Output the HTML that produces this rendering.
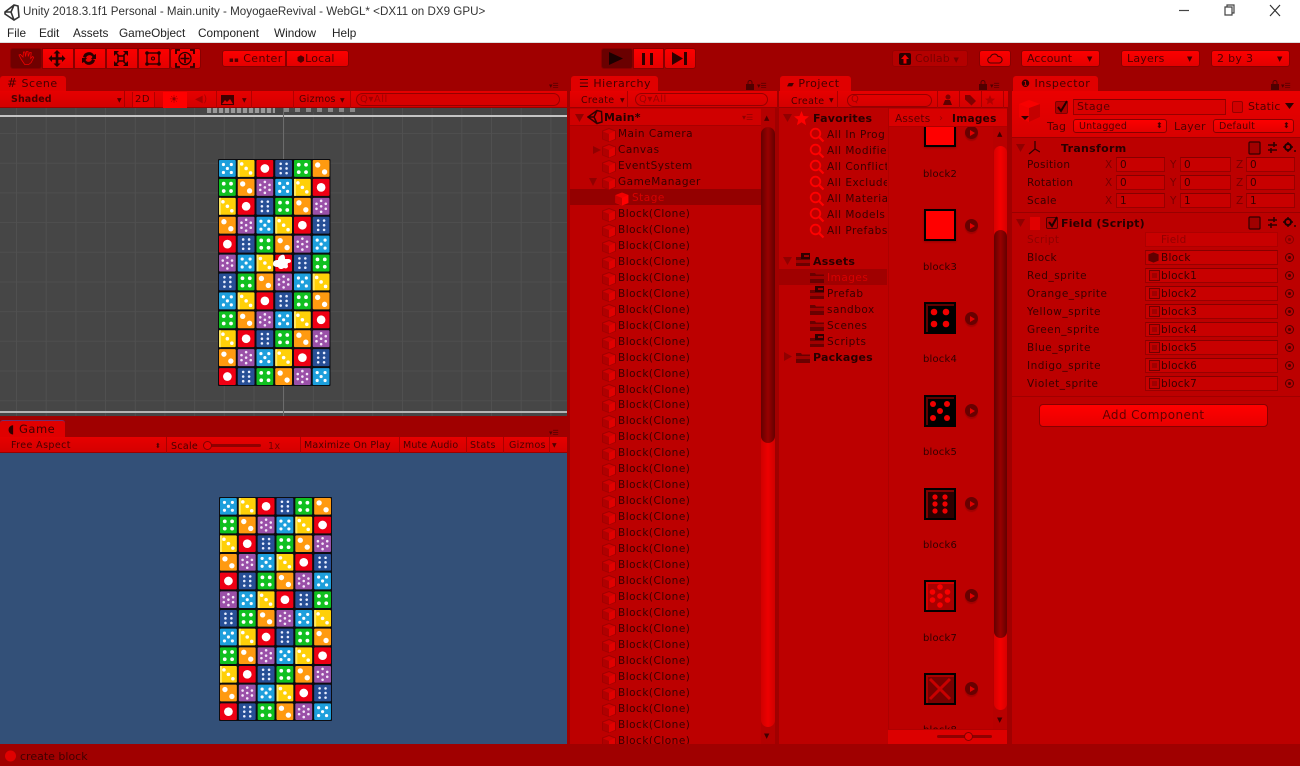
<!DOCTYPE html>
<html><head><meta charset="utf-8"><title>Unity</title>
<style>
*{box-sizing:border-box}
html,body{margin:0;padding:0;width:1300px;height:766px;overflow:hidden;background:#a00000}
body{position:relative;font-family:"DejaVu Sans","Liberation Sans",sans-serif;font-size:10.5px;color:#380000;letter-spacing:.5px;filter:blur(.2px)}
.a{position:absolute}
.t{position:absolute;white-space:nowrap;line-height:14px}
.b{font-weight:bold}
.d{color:#900000}
.btn{position:absolute;background:linear-gradient(#fc0000,#e40000);border:1px solid #880000;border-radius:3px}
.tab{position:absolute;background:#e00000;border-radius:3px 3px 0 0;color:#440000;font-size:11px;line-height:15px}
.bar{position:absolute;background:linear-gradient(#e60000,#d40000);border-bottom:1px solid #9a0000}
.fld{position:absolute;background:#c80000;border:1px solid #980000;border-top-color:#860000;height:15px;line-height:14px;padding-left:3px;white-space:nowrap;overflow:hidden;letter-spacing:.25px}
.list div{height:15.97px;line-height:15.97px;padding-left:48px;position:relative;white-space:nowrap}
.list svg{position:absolute;left:32px;top:1px}
.fav div{height:16px;line-height:16px;padding-left:48px;white-space:nowrap;position:relative}
.fav svg{position:absolute;left:30px;top:0}
.tg{position:absolute;left:1285px;width:9px;height:9px;border:1px solid #500000;border-radius:50%}
.tg:after{content:"";position:absolute;left:2px;top:2px;width:3px;height:3px;background:#500000;border-radius:50%}
.ic{position:absolute;left:1149px;width:11px;height:11px;background:#a00000;border:1px solid #700000;box-shadow:inset 0 0 0 2px #c00000}
.tile{position:absolute;width:32px;height:32px;border:2px solid #000}
.lb{position:absolute;width:36px;text-align:center;font-size:10px;line-height:12px;letter-spacing:.2px;color:#300000}
.pl{position:absolute;width:13px;height:13px;border-radius:50%;background:#680000;box-shadow:0 2px 1px #a00000}
.pl:after{content:"";position:absolute;left:5px;top:3.500px;border-left:5px solid #e00000;border-top:3px solid transparent;border-bottom:3px solid transparent}
</style></head><body>
<svg width="0" height="0" style="position:absolute">
<defs>
<symbol id="lock" viewBox="0 0 8 10"><path d="M2 4V2.500a2 2 0 0 1 4 0V4" fill="none" stroke="#500000"/><rect y="4" width="8" height="6" fill="#500000"/></symbol>
<symbol id="cube" viewBox="0 0 14 14"><path d="M7 .5 13.500 3v8L7 13.500.5 11V3z" fill="#d00000" stroke="#a00000"/><path d="M7 6 13 3v8l-6 2.500z" fill="#e00000"/><path d="M1 3.500 7 6v7L1 11z" fill="#b00000"/></symbol>
<symbol id="cubeb" viewBox="0 0 14 14"><path d="M7 .5 13.500 3v8L7 13.500.5 11V3z" fill="#f00000"/><path d="M7 6 13 3v8l-6 2.500z" fill="#ff0000"/><path d="M1 3.500 7 6v7L1 11z" fill="#c80000"/></symbol>
<symbol id="mag" viewBox="0 0 16 16"><circle cx="6.500" cy="6.500" r="4.800" fill="none" stroke="#ff0000" stroke-width="1.800"/><path d="M10 10l4.500 4.500" stroke="#ff0000" stroke-width="2.200"/></symbol>
<symbol id="fold" viewBox="0 0 16 14"><path d="M1 3h5l1 1.500h8V13H1z" fill="#6a0000"/><path d="M1 6h14v3H1z" fill="#a00000"/></symbol>
<symbol id="fold2" viewBox="0 0 16 14"><path d="M1 4h14v9H1z" fill="#6a0000"/><path d="M1 7h14v3H1z" fill="#a00000"/><path d="M6 0h9v6H6z" fill="#300000"/><path d="M9 2h5v2H9z" fill="#a00000"/></symbol>
<g id="B"><rect width="17" height="17" rx="1" fill="#1d9fdc"/><g fill="#fff"><circle cx="4.500" cy="4.500" r="1.600"/><circle cx="12.500" cy="4.500" r="1.600"/><circle cx="8.500" cy="8.500" r="1.600"/><circle cx="4.500" cy="12.500" r="1.600"/><circle cx="12.500" cy="12.500" r="1.600"/></g></g>
<g id="Y"><rect width="17" height="17" rx="1" fill="#ffd008"/><path d="M0 0h2v17H0z" fill="#ffe860"/><g fill="#fff"><circle cx="4" cy="4" r="1.800"/><circle cx="8.500" cy="8.500" r="1.800"/><circle cx="13" cy="13" r="1.800"/></g></g>
<g id="R"><rect width="17" height="17" rx="1" fill="#ee0014"/><circle cx="8.500" cy="8.500" r="4.400" fill="#fff"/></g>
<g id="I"><rect width="17" height="17" rx="1" fill="#274f96"/><g fill="#e8eeff"><circle cx="5.500" cy="3.800" r="1.300"/><circle cx="11.500" cy="3.800" r="1.300"/><circle cx="5.500" cy="8.500" r="1.300"/><circle cx="11.500" cy="8.500" r="1.300"/><circle cx="5.500" cy="13.200" r="1.300"/><circle cx="11.500" cy="13.200" r="1.300"/></g></g>
<g id="G"><rect width="17" height="17" rx="1" fill="#10c020"/><g fill="#fff"><circle cx="4.800" cy="4.800" r="1.900"/><circle cx="12.200" cy="4.800" r="1.900"/><circle cx="4.800" cy="12.200" r="1.900"/><circle cx="12.200" cy="12.200" r="1.900"/></g></g>
<g id="O"><rect width="17" height="17" rx="1" fill="#ff9a10"/><g fill="#fff"><circle cx="5" cy="5" r="2.700"/><circle cx="12" cy="12" r="2.700"/></g></g>
<g id="V"><rect width="17" height="17" rx="1" fill="#9a50a8"/><g fill="#f4e8f8"><circle cx="8.500" cy="3" r="1.300"/><circle cx="3.800" cy="6" r="1.300"/><circle cx="13.200" cy="6" r="1.300"/><circle cx="8.500" cy="8.500" r="1.300"/><circle cx="3.800" cy="11" r="1.300"/><circle cx="13.200" cy="11" r="1.300"/><circle cx="8.500" cy="14" r="1.300"/></g></g>
<g id="r1"><use href="#B"/><use href="#Y" x="19"/><use href="#R" x="38"/><use href="#I" x="57"/><use href="#G" x="76"/><use href="#O" x="95"/></g>
<g id="r2"><use href="#G"/><use href="#O" x="19"/><use href="#V" x="38"/><use href="#B" x="57"/><use href="#Y" x="76"/><use href="#R" x="95"/></g>
<g id="r3"><use href="#Y"/><use href="#R" x="19"/><use href="#I" x="38"/><use href="#G" x="57"/><use href="#O" x="76"/><use href="#V" x="95"/></g>
<g id="r4"><use href="#O"/><use href="#V" x="19"/><use href="#B" x="38"/><use href="#Y" x="57"/><use href="#R" x="76"/><use href="#I" x="95"/></g>
<g id="r5"><use href="#R"/><use href="#I" x="19"/><use href="#G" x="38"/><use href="#O" x="57"/><use href="#V" x="76"/><use href="#B" x="95"/></g>
<g id="r6"><use href="#V"/><use href="#B" x="19"/><use href="#Y" x="38"/><use href="#R" x="57"/><use href="#I" x="76"/><use href="#G" x="95"/></g>
<g id="r7"><use href="#I"/><use href="#G" x="19"/><use href="#O" x="38"/><use href="#V" x="57"/><use href="#B" x="76"/><use href="#Y" x="95"/></g>
<g id="grid"><rect width="114" height="228" rx="1" fill="#0c0c10"/><g transform="translate(1 1)"><use href="#r1"/><use href="#r2" y="19"/><use href="#r3" y="38"/><use href="#r4" y="57"/><use href="#r5" y="76"/><use href="#r6" y="95"/><use href="#r7" y="114"/><use href="#r1" y="133"/><use href="#r2" y="152"/><use href="#r3" y="171"/><use href="#r4" y="190"/><use href="#r5" y="209"/></g></g>
</defs></svg>

<!-- title bar -->
<div class="a" style="left:0;top:0;width:1300px;height:43px;background:#fff;border-bottom:1px solid #ddd"></div>
<svg class="a" style="left:3px;top:3px" width="17" height="18" viewBox="0 0 17 18"><path d="M2 9 11 2l4 1 1 11-5 3-9-6zM11 2 8 9l3 8M2 9h6" fill="none" stroke="#333" stroke-width="1.600"/></svg>
<div class="t" style="left:23px;top:5px;font:11.620px/14px 'Liberation Sans',sans-serif;letter-spacing:0;color:#333">Unity 2018.3.1f1 Personal - Main.unity - MoyogaeRevival - WebGL* &lt;DX11 on DX9 GPU&gt;</div>
<div class="t" style="left:7px;top:26px;font:11.800px/14px 'Liberation Sans',sans-serif;letter-spacing:0;color:#222">File</div>
<div class="t" style="left:39px;top:26px;font:11.800px/14px 'Liberation Sans',sans-serif;letter-spacing:0;color:#222">Edit</div>
<div class="t" style="left:73px;top:26px;font:11.800px/14px 'Liberation Sans',sans-serif;letter-spacing:0;color:#222">Assets</div>
<div class="t" style="left:119px;top:26px;font:11.800px/14px 'Liberation Sans',sans-serif;letter-spacing:0;color:#222">GameObject</div>
<div class="t" style="left:198px;top:26px;font:11.800px/14px 'Liberation Sans',sans-serif;letter-spacing:0;color:#222">Component</div>
<div class="t" style="left:274px;top:26px;font:11.800px/14px 'Liberation Sans',sans-serif;letter-spacing:0;color:#222">Window</div>
<div class="t" style="left:332px;top:26px;font:11.800px/14px 'Liberation Sans',sans-serif;letter-spacing:0;color:#222">Help</div>
<svg class="a" style="left:1175px;top:3px" width="115" height="15" viewBox="0 0 115 15"><path d="M4 7.500h10" stroke="#444" stroke-width="1.200"/><path d="M50 4h7v8h-7zM52 4V2h7v8h-2" fill="none" stroke="#444" stroke-width="1.200"/><path d="M95 2l10 11M105 2 95 13" stroke="#333" stroke-width="1.200"/></svg>

<!-- main toolbar -->
<div class="btn" style="left:10px;top:48px;width:32px;height:21px;background:#700000"></div>
<div class="btn" style="left:42px;top:48px;width:32px;height:21px;border-radius:0"></div>
<div class="btn" style="left:74px;top:48px;width:32px;height:21px;border-radius:0"></div>
<div class="btn" style="left:106px;top:48px;width:32px;height:21px;border-radius:0"></div>
<div class="btn" style="left:138px;top:48px;width:32px;height:21px;border-radius:0"></div>
<div class="btn" style="left:170px;top:48px;width:31px;height:21px"></div>
<svg class="a" style="left:10px;top:48px" width="191" height="21" viewBox="0 0 191 21">
<path d="M11 11 9 7l1.500-.5L13 9l.5-5H15l.5 4.500L16.500 3.500H18l.2 5 1.500-4h1.500l-.5 6 2-2 1 1-2.500 5-2.500 2h-4z" fill="#7a0000" stroke="#f00000" stroke-width=".8"/>
<path d="M47 2l3.500 3.500h-2.200v3.700h3.700V7l3.500 3.500L52 14v-2.200h-3.700v3.700h2.200L47 19l-3.500-3.500h2.200v-3.700H42V14l-3.500-3.500L42 7v2.200h3.700V5.500h-2.200z" fill="#2a0000"/>
<path d="M73 9a6 6 0 0 1 11-2l2-1v5h-5l1.500-2a3.500 3.500 0 0 0-6.500 1zM85 12a6 6 0 0 1-11 2l-2 1v-5h5l-1.500 2a3.500 3.500 0 0 0 6.500-1z" fill="#2a0000"/>
<path d="M104 3h5l-2 2 2 2-1 1-2-2-2 2zM118 3h-5l2 2-2 2 1 1 2-2 2 2zM104 18h5l-2-2 2-2-1-1-2 2-2-2zM118 18h-5l2-2-2-2 1-1 2 2 2-2z" fill="#2a0000"/><rect x="108" y="8" width="6" height="5" fill="none" stroke="#2a0000" stroke-width="1.500"/>
<rect x="137" y="5" width="12" height="11" fill="none" stroke="#2a0000" stroke-width="1.400"/><g fill="#2a0000"><circle cx="137" cy="5" r="1.800"/><circle cx="149" cy="5" r="1.800"/><circle cx="137" cy="16" r="1.800"/><circle cx="149" cy="16" r="1.800"/></g><circle cx="143" cy="10.500" r="1.500" fill="none" stroke="#2a0000"/>
<circle cx="175" cy="10.500" r="6" fill="none" stroke="#2a0000" stroke-width="1.300"/><path d="M175 6v9M170.500 10.500h9" stroke="#2a0000" stroke-width="1.600"/><path d="M166 6V2h4M184 6V2h-4M166 15v4h4M184 15v4h-4" fill="none" stroke="#2a0000" stroke-width="1.800"/></svg>

<div class="btn" style="left:222px;top:50px;width:64px;height:17px;border-radius:3px 0 0 3px"></div>
<div class="btn" style="left:286px;top:50px;width:63px;height:17px;border-radius:0 3px 3px 0"></div>
<div class="t" style="left:229px;top:51.500px;font-size:11px;letter-spacing:.4px;color:#500000"><span style="font-size:7px">▪▪</span> Center</div>
<div class="t" style="left:297px;top:51.500px;font-size:11px;letter-spacing:.2px;color:#500000"><span style="font-size:9px">⬢</span>Local</div>

<div class="btn" style="left:601px;top:48px;width:32px;height:21px;background:#6a0000"></div>
<div class="btn" style="left:633px;top:48px;width:31px;height:21px;border-radius:0"></div>
<div class="btn" style="left:664px;top:48px;width:32px;height:21px"></div>
<svg class="a" style="left:601px;top:48px" width="96" height="21" viewBox="0 0 96 21"><path d="M8 4l14 6.500L8 17z" fill="#1c0000"/><path d="M41 5h3v12h-3zM49 5h3v12h-3z" fill="#300000"/><path d="M71 4l11 6.500L71 17zM83 4h3v13h-3z" fill="#300000"/></svg>

<div class="btn" style="left:892px;top:50px;width:76px;height:17px;background:#b40000;border-color:#960000"></div>
<svg class="a" style="left:899px;top:53px" width="12" height="12" viewBox="0 0 12 12"><rect width="12" height="12" rx="2" fill="#2a0000"/><path d="M6 1.500 10 6H7.500v4.500h-3V6H2z" fill="#f00000"/></svg>
<div class="t" style="left:915px;top:51.500px;font-size:11px;letter-spacing:.1px;color:#780000">Collab <span style="font-size:7px">▼</span></div>
<div class="btn" style="left:979px;top:50px;width:32px;height:17px"></div>
<svg class="a" style="left:987px;top:53px" width="16" height="11" viewBox="0 0 16 11"><path d="M4 10a3 3 0 0 1-.5-6A4 4 0 0 1 11 3.500 3.200 3.200 0 0 1 12.500 10z" fill="none" stroke="#500000" stroke-width="1.100"/></svg>
<div class="btn" style="left:1021px;top:50px;width:79px;height:17px"></div>
<div class="t" style="left:1027px;top:51.500px;font-size:11px;letter-spacing:.1px;color:#500000">Account</div><div class="t" style="left:1087px;top:52px;font-size:7px;color:#400000">▼</div>
<div class="btn" style="left:1121px;top:50px;width:79px;height:17px"></div>
<div class="t" style="left:1127px;top:51.500px;font-size:11px;letter-spacing:.2px;color:#500000">Layers</div><div class="t" style="left:1187px;top:52px;font-size:7px;color:#400000">▼</div>
<div class="btn" style="left:1211px;top:50px;width:79px;height:17px"></div>
<div class="t" style="left:1217px;top:51.500px;font-size:11px;letter-spacing:.3px;color:#500000">2 by 3</div><div class="t" style="left:1277px;top:52px;font-size:7px;color:#400000">▼</div>

<!-- Scene -->
<div class="tab" style="left:0;top:76px;width:66px;height:16px;padding-left:7px"><span style="font-size:12px">#</span> Scene</div>
<div class="t" style="left:549px;top:79px;font-size:7px;letter-spacing:0;color:#500000">▾☰</div>
<div class="bar" style="left:0;top:91px;width:567px;height:17px"></div>
<div class="t" style="left:11px;top:93px;font-size:9.500px;font-weight:600;letter-spacing:.1px;color:#480000">Shaded</div>
<div class="t" style="left:117px;top:94px;font-size:6px;color:#500000">▼</div>
<div class="a" style="left:124px;top:91px;width:1px;height:17px;background:#a80000"></div>
<div class="a" style="left:132px;top:92px;width:23px;height:15px;background:#e80000;border-left:1px solid #b00000;border-right:1px solid #b00000"></div>
<div class="t" style="left:135px;top:93px;font-size:10px;color:#500000">2D</div>
<div class="a" style="left:163px;top:92px;width:24px;height:16px;background:#ff0000"></div>
<div class="t" style="left:169px;top:93px;font-size:11px;color:#900000">☀</div>
<div class="t" style="left:195px;top:93px;font-size:10px;color:#a80000">◀)</div>
<svg class="a" style="left:221px;top:95px" width="13" height="10" viewBox="0 0 13 10"><rect width="13" height="10" fill="#400000"/><path d="M1 9l3-4 2 2 3-3 3 5z" fill="#e00000"/></svg>
<div class="t" style="left:242px;top:94px;font-size:6px;color:#500000">▼</div>
<div class="a" style="left:216px;top:91px;width:36px;height:17px;border-left:1px solid #b00000;border-right:1px solid #b00000"></div>
<div class="a" style="left:293px;top:91px;width:58px;height:17px;border-left:1px solid #b00000;border-right:1px solid #b00000"></div>
<div class="t" style="left:299px;top:93px;font-size:9.500px;letter-spacing:.3px;color:#480000">Gizmos</div>
<div class="t" style="left:340px;top:94px;font-size:6px;color:#500000">▼</div>
<div class="a" style="left:356px;top:93px;width:204px;height:13px;border:1px solid #960000;border-radius:7px;background:#d80000"></div>
<div class="t" style="left:360px;top:93px;font-size:10px;color:#a00000">Q▾All</div>

<div class="a" style="left:0;top:108px;width:567px;height:308px;background-color:#464646;background-image:linear-gradient(90deg,#505050 1px,transparent 1px),linear-gradient(#4e4e4e 1px,transparent 1px);background-size:29.700px 29.700px;background-position:16px 25px;overflow:hidden">
<div class="a" style="left:0;top:7px;width:567px;height:1.500px;background:#c4c4c4"></div>
<div class="a" style="left:0;top:303px;width:567px;height:1.500px;background:#b4b4b4"></div>
<div class="a" style="left:283px;top:0;width:1px;height:308px;background:#6c6c6c"></div>
<div class="a" style="left:207px;top:0;width:68px;height:5px;background:repeating-linear-gradient(90deg,#999 0 4px,#555 4px 6px)"></div>
<div class="a" style="left:284px;top:0;width:72px;height:4px;background:repeating-linear-gradient(90deg,#888 0 5px,#4a4a4a 5px 11px)"></div>
</div>
<svg class="a" style="left:218px;top:159px" width="112.500" height="227" viewBox="0 0 114 228" preserveAspectRatio="none"><use href="#grid"/></svg>
<svg class="a" style="left:271px;top:253px" width="22" height="18" viewBox="0 0 22 18"><path d="M2 11c0-3 2-4 5-4 0-3 3-6 6-5 1 1 1 3 1 4h2c2 0 4 0 4 2s-2 2-4 2l1 3c0 2-2 3-4 2l-2 1c-2 0-3 0-4-2-3 0-5-1-5-3z" fill="#fff"/></svg>

<!-- Game -->
<div class="a" style="left:0;top:416px;width:567px;height:21px;background:#a00000"></div>
<div class="tab" style="left:0;top:420px;width:65px;height:17px;padding-left:8px;padding-top:1px;border-top:1px solid #703070;font-size:11.500px"><span style="font-size:12px;color:#300000">◖</span> Game</div>
<div class="t" style="left:549px;top:426px;font-size:7px;letter-spacing:0;color:#500000">▾☰</div>
<div class="bar" style="left:0;top:437px;width:567px;height:16px"></div>
<div class="t" style="left:11px;top:439px;font-size:9.500px;color:#480000;letter-spacing:.4px">Free Aspect</div>
<div class="t" style="left:155px;top:439px;font-size:7px;color:#500000">⬍</div>
<div class="a" style="left:166px;top:437px;width:1px;height:16px;background:#a80000"></div>
<div class="t" style="left:171px;top:439.500px;font-size:9.500px;letter-spacing:.3px;color:#480000">Scale</div>
<div class="a" style="left:205px;top:444px;width:56px;height:3px;background:#900000;border-radius:2px"></div>
<div class="a" style="left:203px;top:441px;width:9px;height:9px;background:#e80000;border:1px solid #800000;border-radius:50%"></div>
<div class="t" style="left:268px;top:439.500px;font-size:9.500px;color:#700000">1x</div>
<div class="a" style="left:300px;top:437px;width:1px;height:16px;background:#a80000"></div>
<div class="t" style="left:304px;top:439px;font-size:9.500px;letter-spacing:.15px;color:#480000">Maximize On Play</div>
<div class="a" style="left:399px;top:437px;width:1px;height:16px;background:#a80000"></div>
<div class="t" style="left:403px;top:439px;font-size:9.500px;letter-spacing:.15px;color:#480000">Mute Audio</div>
<div class="a" style="left:466px;top:437px;width:1px;height:16px;background:#a80000"></div>
<div class="t" style="left:470px;top:439px;font-size:9.500px;letter-spacing:.3px;color:#480000">Stats</div>
<div class="a" style="left:503px;top:437px;width:1px;height:16px;background:#a80000"></div>
<div class="t" style="left:509px;top:439px;font-size:9.500px;letter-spacing:.3px;color:#480000">Gizmos</div>
<div class="a" style="left:549px;top:437px;width:1px;height:16px;background:#a80000"></div>
<div class="t" style="left:552px;top:439px;font-size:6px;color:#500000">▼</div>
<div class="a" style="left:0;top:453px;width:567px;height:291px;background:#335078"></div>
<svg class="a" style="left:218.500px;top:496.500px" width="113" height="224" viewBox="0 0 114 228" preserveAspectRatio="none"><use href="#grid"/></svg>

<!-- Hierarchy -->
<div class="tab" style="left:571px;top:76px;width:87px;height:16px;padding-left:8px">☰ Hierarchy</div>
<svg class="a" style="left:746px;top:80px" width="8" height="10"><use href="#lock"/></svg>
<div class="t" style="left:757px;top:79px;font-size:7px;letter-spacing:0;color:#500000">▾☰</div>
<div class="bar" style="left:570px;top:91px;width:207px;height:17px"></div>
<div class="t" style="left:581px;top:93.500px;font-size:9.500px;letter-spacing:.3px;color:#480000">Create</div><div class="t" style="left:620px;top:94px;font-size:6px;color:#500000">▼</div>
<div class="a" style="left:627px;top:91px;width:1px;height:17px;background:#a80000"></div>
<div class="a" style="left:635px;top:93px;width:133px;height:13px;border:1px solid #960000;border-radius:7px"></div>
<div class="t" style="left:639px;top:93px;font-size:10px;color:#a00000">Q▾All</div>
<div class="a" style="left:570px;top:108px;width:205px;height:636px;background:#bc0000;overflow:hidden">
<div class="a" style="left:0;top:1px;width:191px;height:17px;background:#d00000;border-bottom:1px solid #a80000"></div>
<svg class="a" style="left:5px;top:6px" width="9" height="8" viewBox="0 0 9 8"><path d="M0 0h9L4.500 8z" fill="#900000"/></svg>
<svg class="a" style="left:17px;top:1px" width="16" height="16" viewBox="0 0 16 16"><path d="M1 8 10 1.500l4.500 1L15 13l-5 1.500zM10 1.500 7 8l3 6.500M1 8h6" fill="none" stroke="#300000" stroke-width="1.500"/></svg>
<div class="t b" style="left:34px;top:3px;font-size:11px;letter-spacing:.2px;color:#280000">Main*</div>
<div class="t" style="left:172px;top:3px;font-size:8px;letter-spacing:0;color:#900000">▾☰</div>
<div class="a" style="left:0;top:81px;width:191px;height:15.500px;background:#940000"></div>
<svg class="a" style="left:23px;top:38px" width="8" height="8" viewBox="0 0 8 8"><path d="M0 0l8 4-8 4z" fill="#900000"/></svg>
<svg class="a" style="left:19px;top:70px" width="8" height="8" viewBox="0 0 8 8"><path d="M0 0h8L4 8z" fill="#900000"/></svg>
<div class="list a" style="left:0;top:19px;width:191px">
<div><svg width="14" height="14"><use href="#cube"/></svg>Main Camera</div>
<div><svg width="14" height="14"><use href="#cube"/></svg>Canvas</div>
<div><svg width="14" height="14"><use href="#cube"/></svg>EventSystem</div>
<div><svg width="14" height="14"><use href="#cube"/></svg>GameManager</div>
<div style="color:#d80000"><svg width="14" height="14" style="left:45px"><use href="#cubeb"/></svg><span style="padding-left:14px">Stage</span></div>
<div><svg width="14" height="14"><use href="#cube"/></svg>Block(Clone)</div>
<div><svg width="14" height="14"><use href="#cube"/></svg>Block(Clone)</div>
<div><svg width="14" height="14"><use href="#cube"/></svg>Block(Clone)</div>
<div><svg width="14" height="14"><use href="#cube"/></svg>Block(Clone)</div>
<div><svg width="14" height="14"><use href="#cube"/></svg>Block(Clone)</div>
<div><svg width="14" height="14"><use href="#cube"/></svg>Block(Clone)</div>
<div><svg width="14" height="14"><use href="#cube"/></svg>Block(Clone)</div>
<div><svg width="14" height="14"><use href="#cube"/></svg>Block(Clone)</div>
<div><svg width="14" height="14"><use href="#cube"/></svg>Block(Clone)</div>
<div><svg width="14" height="14"><use href="#cube"/></svg>Block(Clone)</div>
<div><svg width="14" height="14"><use href="#cube"/></svg>Block(Clone)</div>
<div><svg width="14" height="14"><use href="#cube"/></svg>Block(Clone)</div>
<div><svg width="14" height="14"><use href="#cube"/></svg>Block(Clone)</div>
<div><svg width="14" height="14"><use href="#cube"/></svg>Block(Clone)</div>
<div><svg width="14" height="14"><use href="#cube"/></svg>Block(Clone)</div>
<div><svg width="14" height="14"><use href="#cube"/></svg>Block(Clone)</div>
<div><svg width="14" height="14"><use href="#cube"/></svg>Block(Clone)</div>
<div><svg width="14" height="14"><use href="#cube"/></svg>Block(Clone)</div>
<div><svg width="14" height="14"><use href="#cube"/></svg>Block(Clone)</div>
<div><svg width="14" height="14"><use href="#cube"/></svg>Block(Clone)</div>
<div><svg width="14" height="14"><use href="#cube"/></svg>Block(Clone)</div>
<div><svg width="14" height="14"><use href="#cube"/></svg>Block(Clone)</div>
<div><svg width="14" height="14"><use href="#cube"/></svg>Block(Clone)</div>
<div><svg width="14" height="14"><use href="#cube"/></svg>Block(Clone)</div>
<div><svg width="14" height="14"><use href="#cube"/></svg>Block(Clone)</div>
<div><svg width="14" height="14"><use href="#cube"/></svg>Block(Clone)</div>
<div><svg width="14" height="14"><use href="#cube"/></svg>Block(Clone)</div>
<div><svg width="14" height="14"><use href="#cube"/></svg>Block(Clone)</div>
<div><svg width="14" height="14"><use href="#cube"/></svg>Block(Clone)</div>
<div><svg width="14" height="14"><use href="#cube"/></svg>Block(Clone)</div>
<div><svg width="14" height="14"><use href="#cube"/></svg>Block(Clone)</div>
<div><svg width="14" height="14"><use href="#cube"/></svg>Block(Clone)</div>
<div><svg width="14" height="14"><use href="#cube"/></svg>Block(Clone)</div>
<div><svg width="14" height="14"><use href="#cube"/></svg>Block(Clone)</div>
</div>
<div class="a" style="left:191px;top:0;width:14px;height:636px;background:#b40000"></div>
<div class="a" style="left:191px;top:19px;width:14px;height:600px;background:linear-gradient(90deg,#d00000,#ec0000 50%,#d00000);border-radius:7px"></div>
<div class="a" style="left:191px;top:19px;width:14px;height:316px;background:linear-gradient(90deg,#640000,#980000 50%,#640000);border-radius:7px"></div>
<div class="t" style="left:194px;top:3px;font-size:7px;color:#500000">▲</div>
<div class="t" style="left:194px;top:621px;font-size:7px;color:#400000">▼</div>
</div>

<!-- Project -->
<div class="tab" style="left:780px;top:76px;width:71px;height:16px;padding-left:7px"><span style="font-size:9px">▰</span> Project</div>
<svg class="a" style="left:979px;top:80px" width="8" height="10"><use href="#lock"/></svg>
<div class="t" style="left:990px;top:79px;font-size:7px;letter-spacing:0;color:#500000">▾☰</div>
<div class="bar" style="left:779px;top:91px;width:229px;height:17px"></div>
<div class="t" style="left:791px;top:94.500px;font-size:9.500px;letter-spacing:.3px;color:#480000">Create</div><div class="t" style="left:829px;top:94px;font-size:6px;color:#500000">▼</div>
<div class="a" style="left:837px;top:91px;width:1px;height:17px;background:#a80000"></div>
<div class="a" style="left:847px;top:94px;width:85px;height:13px;border:1px solid #960000;border-radius:7px"></div>
<div class="t" style="left:851px;top:93px;font-size:10px;color:#a00000">Q</div>
<div class="a" style="left:937px;top:91px;width:1px;height:17px;background:#a80000"></div><div class="a" style="left:959px;top:91px;width:1px;height:17px;background:#a80000"></div><div class="a" style="left:981px;top:91px;width:1px;height:17px;background:#a80000"></div><div class="a" style="left:1003px;top:91px;width:1px;height:17px;background:#a80000"></div>
<svg class="a" style="left:941px;top:94px" width="62" height="12" viewBox="0 0 62 12"><circle cx="7" cy="3" r="2.500" fill="#800000"/><path d="M2 11l2-5h5l2 5z" fill="#600000"/><path d="M24 1h5l6 6-4.500 4.500-6.500-6z" fill="#800000"/><path d="M49 1l1.500 3.500 3.500.3-2.700 2.400.8 3.800L49 8.500 45.900 10.500l.8-3.800L44 4.800l3.500-.3z" fill="#b00000"/></svg>
<div class="a" style="left:779px;top:108px;width:229px;height:636px;background:#bc0000"></div>
<div class="a" style="left:888px;top:108px;width:1px;height:636px;background:#ac0000"></div>
<svg class="a" style="left:783px;top:114px" width="9" height="8" viewBox="0 0 9 8"><path d="M0 0h9L4.500 8z" fill="#900000"/></svg>
<svg class="a" style="left:794px;top:111px" width="15" height="15" viewBox="0 0 15 15"><path d="M7.500 0l2 5 5.500.4-4.200 3.500 1.300 5.400-4.600-3-4.600 3 1.300-5.400L0 5.400 5.500 5z" fill="#ff0000"/></svg>
<div class="t b" style="left:813px;top:112px;font-size:11px;letter-spacing:.2px;color:#280000">Favorites</div>
<div class="fav a" style="left:779px;top:127px;width:108px;overflow:hidden;height:112px">
<div><svg width="16" height="16"><use href="#mag"/></svg>All In Prog</div>
<div><svg width="16" height="16"><use href="#mag"/></svg>All Modified</div>
<div><svg width="16" height="16"><use href="#mag"/></svg>All Conflict</div>
<div><svg width="16" height="16"><use href="#mag"/></svg>All Exclude</div>
<div><svg width="16" height="16"><use href="#mag"/></svg>All Materia</div>
<div><svg width="16" height="16"><use href="#mag"/></svg>All Models</div>
<div><svg width="16" height="16"><use href="#mag"/></svg>All Prefabs</div>
</div>
<svg class="a" style="left:783px;top:257px" width="9" height="8" viewBox="0 0 9 8"><path d="M0 0h9L4.500 8z" fill="#900000"/></svg>
<svg class="a" style="left:795px;top:253px" width="16" height="14" viewBox="0 0 16 14"><use href="#fold2"/></svg>
<div class="t b" style="left:813px;top:254.500px;font-size:11px;letter-spacing:.2px;color:#280000">Assets</div>
<div class="a" style="left:779px;top:269px;width:108px;height:16px;background:#a00000"></div>
<svg class="a" style="left:809px;top:270px" width="16" height="14" viewBox="0 0 16 14"><use href="#fold"/></svg>
<div class="t" style="left:827px;top:270.500px;color:#d80000">Images</div>
<svg class="a" style="left:809px;top:286px" width="16" height="14" viewBox="0 0 16 14"><use href="#fold2"/></svg>
<div class="t" style="left:827px;top:286.500px">Prefab</div>
<svg class="a" style="left:809px;top:302px" width="16" height="14" viewBox="0 0 16 14"><use href="#fold"/></svg>
<div class="t" style="left:827px;top:302.500px">sandbox</div>
<svg class="a" style="left:809px;top:318px" width="16" height="14" viewBox="0 0 16 14"><use href="#fold"/></svg>
<div class="t" style="left:827px;top:318.500px">Scenes</div>
<svg class="a" style="left:809px;top:334px" width="16" height="14" viewBox="0 0 16 14"><use href="#fold2"/></svg>
<div class="t" style="left:827px;top:334.500px">Scripts</div>
<svg class="a" style="left:784px;top:352px" width="8" height="9" viewBox="0 0 8 9"><path d="M0 0l8 4.500L0 9z" fill="#900000"/></svg>
<svg class="a" style="left:795px;top:350px" width="16" height="14" viewBox="0 0 16 14"><use href="#fold"/></svg>
<div class="t b" style="left:813px;top:350.500px;font-size:11px;letter-spacing:.2px;color:#280000">Packages</div>

<div class="a" style="left:889px;top:109px;width:119px;height:18px;background:#d80000;border-bottom:1px solid #b00000"></div>
<div class="t" style="left:895px;top:112px;font-size:10.500px;letter-spacing:.2px;color:#580000">Assets</div>
<div class="t" style="left:939px;top:112px;font-size:10px;color:#a00000">›</div>
<div class="t b" style="left:952px;top:112px;font-size:10.500px;letter-spacing:.3px;color:#280000">Images</div>

<div class="a" style="left:889px;top:127px;width:104px;height:602px;overflow:hidden">
<div class="tile" style="left:35px;top:-12px;background:#ff0000;box-shadow:0 1px 2px #900000"></div>
<div class="lb" style="left:33px;top:42px">block2</div>
<div class="tile" style="left:35px;top:82px;background:#ff0000;box-shadow:0 1px 2px #900000"></div>
<div class="lb" style="left:33px;top:135px">block3</div>
<svg class="a" style="left:35px;top:175px" width="32" height="32" viewBox="0 0 32 32"><rect width="32" height="32" fill="#000"/><path d="M2 30V2h28v2H4v26z" fill="#600000"/><g fill="#f00000"><circle cx="10" cy="10" r="3.300"/><circle cx="22" cy="10" r="3.300"/><circle cx="10" cy="22" r="3.300"/><circle cx="22" cy="22" r="3.300"/></g></svg>
<div class="lb" style="left:33px;top:227px">block4</div>
<svg class="a" style="left:35px;top:268px" width="32" height="32" viewBox="0 0 32 32"><rect width="32" height="32" fill="#000"/><path d="M2 30V2h28v2H4v26z" fill="#600000"/><g fill="#f00000"><circle cx="9" cy="9" r="3"/><circle cx="23" cy="9" r="3"/><circle cx="16" cy="16" r="3"/><circle cx="9" cy="23" r="3"/><circle cx="23" cy="23" r="3"/></g></svg>
<div class="lb" style="left:33px;top:320px">block5</div>
<svg class="a" style="left:35px;top:361px" width="32" height="32" viewBox="0 0 32 32"><rect width="32" height="32" fill="#000"/><rect x="2" y="2" width="28" height="28" fill="#2c0000"/><path d="M2 30V2h28v2H4v26z" fill="#800000"/><g fill="#f00000"><circle cx="11" cy="9" r="2.600"/><circle cx="21" cy="9" r="2.600"/><circle cx="11" cy="16" r="2.600"/><circle cx="21" cy="16" r="2.600"/><circle cx="11" cy="23" r="2.600"/><circle cx="21" cy="23" r="2.600"/></g></svg>
<div class="lb" style="left:33px;top:413px">block6</div>
<svg class="a" style="left:35px;top:453px" width="32" height="32" viewBox="0 0 32 32"><rect width="32" height="32" fill="#000"/><rect x="2" y="2" width="28" height="28" fill="#a80000"/><path d="M2 30V2h28v2H4v26z" fill="#d80000"/><g fill="#f80000"><circle cx="16" cy="7" r="2.800"/><circle cx="8.500" cy="12" r="2.800"/><circle cx="23.500" cy="12" r="2.800"/><circle cx="16" cy="16" r="2.800"/><circle cx="8.500" cy="20" r="2.800"/><circle cx="23.500" cy="20" r="2.800"/><circle cx="16" cy="25" r="2.800"/></g></svg>
<div class="lb" style="left:33px;top:506px">block7</div>
<svg class="a" style="left:35px;top:546px" width="32" height="32" viewBox="0 0 32 32"><rect width="32" height="32" fill="#000"/><rect x="2" y="2" width="28" height="28" fill="#780000"/><path d="M2 30V2h28v2H4v26z" fill="#a80000"/><path d="M6 6l20 20M26 6 6 26" stroke="#c80000" stroke-width="3"/></svg>
<div class="lb" style="left:33px;top:598px">block8</div>
<div class="pl" style="left:76px;top:-1px"></div>
<div class="pl" style="left:76px;top:92px"></div>
<div class="pl" style="left:76px;top:185px"></div>
<div class="pl" style="left:76px;top:277px"></div>
<div class="pl" style="left:76px;top:370px"></div>
<div class="pl" style="left:76px;top:462px"></div>
<div class="pl" style="left:76px;top:555px"></div>
</div>
<div class="a" style="left:993px;top:127px;width:14px;height:602px;background:#b80000"></div>
<div class="a" style="left:994px;top:146px;width:13px;height:564px;background:linear-gradient(90deg,#d80000,#f40000 50%,#d80000);border-radius:7px"></div>
<div class="a" style="left:994px;top:230px;width:13px;height:408px;background:linear-gradient(90deg,#640000,#980000 50%,#640000);border-radius:7px"></div>
<div class="t" style="left:997px;top:127px;font-size:7px;color:#400000">▲</div>
<div class="t" style="left:997px;top:713px;font-size:7px;color:#400000">▼</div>
<div class="a" style="left:888px;top:729px;width:119px;height:15px;background:#dc0000;border-top:1px solid #b00000"></div>
<div class="a" style="left:937px;top:735px;width:55px;height:3px;background:#900000;border-radius:2px"></div>
<div class="a" style="left:964px;top:732px;width:9px;height:9px;background:#e80000;border:1px solid #800000;border-radius:50%"></div>
<div class="a" style="left:1007px;top:108px;width:4px;height:636px;background:#a00000"></div>

<!-- Inspector -->
<div class="tab" style="left:1013px;top:76px;width:85px;height:16px;padding-left:8px"><span style="font-size:10px;color:#300000">❶</span> Inspector</div>
<svg class="a" style="left:1271px;top:80px" width="8" height="10"><use href="#lock"/></svg>
<div class="t" style="left:1281px;top:79px;font-size:7px;letter-spacing:0;color:#500000">▾☰</div>
<div class="a" style="left:1012px;top:91px;width:288px;height:653px;background:#bc0000"></div>
<div class="a" style="left:1012px;top:91px;width:288px;height:47px;background:linear-gradient(#ea0000,#d80000);border-bottom:1px solid #9c0000"></div>
<svg class="a" style="left:1018px;top:99px" width="23" height="24" viewBox="0 0 23 24"><path d="M11 1 22 5v13l-11 5L1 18V5z" fill="#f80000"/><path d="M1 5l10 4v14L1 18z" fill="#f00000"/><path d="M11 9l11-4v13l-11 5z" fill="#c40000"/><path d="M3 17h8l-4 4z" fill="#300000"/></svg>
<div class="a" style="left:1055px;top:101px;width:13px;height:13px;background:#b00000;border:1px solid #800000;border-radius:2px"></div>
<svg class="a" style="left:1056px;top:100px" width="13" height="13" viewBox="0 0 13 13"><path d="M2 7l3 4 6-10" fill="none" stroke="#200000" stroke-width="2"/></svg>
<div class="fld" style="left:1073px;top:99px;width:153px;height:16px;background:#d80000;line-height:14px;padding-left:3px;color:#580000;font-size:11px;letter-spacing:.3px">Stage</div>
<div class="a" style="left:1232px;top:101px;width:11px;height:12px;background:#d00000;border:1px solid #960000;border-radius:2px"></div>
<div class="t" style="left:1248px;top:100px;font-size:11px;letter-spacing:.2px;color:#500000">Static</div>
<svg class="a" style="left:1285px;top:103px" width="9" height="6" viewBox="0 0 9 6"><path d="M0 0h9L4.500 6z" fill="#300000"/></svg>
<div class="t" style="left:1047px;top:120px;font-size:11px;letter-spacing:.2px;color:#500000">Tag</div>
<div class="btn" style="left:1073px;top:119px;width:94px;height:14px;font-size:9.500px;line-height:13px;padding-left:5px;color:#500000;letter-spacing:.2px">Untagged</div>
<div class="t" style="left:1156px;top:119px;font-size:8px;letter-spacing:0;color:#400000">⬍</div>
<div class="t" style="left:1174px;top:120px;font-size:11px;letter-spacing:.2px;color:#500000">Layer</div>
<div class="btn" style="left:1213px;top:119px;width:81px;height:14px;font-size:9.500px;line-height:13px;padding-left:5px;color:#500000;letter-spacing:.2px">Default</div>
<div class="t" style="left:1283px;top:119px;font-size:8px;letter-spacing:0;color:#400000">⬍</div>

<svg class="a" style="left:1016px;top:144px" width="9" height="8" viewBox="0 0 9 8"><path d="M0 0h9L4.500 8z" fill="#900000"/></svg>
<svg class="a" style="left:1028px;top:141px" width="12" height="14" viewBox="0 0 12 14"><path d="M7 0v8L1 13M7 8l5 3" stroke="#300000" stroke-width="1.300" fill="none"/></svg>
<div class="t b" style="left:1061px;top:142px;font-size:11px;letter-spacing:.3px;color:#280000">Transform</div>
<svg class="a" style="left:1248px;top:141px" width="50" height="14" viewBox="0 0 50 14"><rect x="1" y="1" width="11" height="12" rx="1" fill="#a00000" stroke="#300000" stroke-width="1.200"/><path d="M20 4h9M20 9h9M26 1v5M23 7v5" stroke="#300000" stroke-width="1.600"/><circle cx="40" cy="6" r="3" fill="none" stroke="#200000" stroke-width="2"/><path d="M40 1v1.500M40 9.500V11M35 6h1.500M43.500 6H45M47 9v2" stroke="#200000" stroke-width="1.400"/></svg>

<div class="t" style="left:1027px;top:158px;letter-spacing:.3px">Position</div><div class="t" style="left:1027px;top:176px;letter-spacing:.3px">Rotation</div><div class="t" style="left:1027px;top:193.500px;letter-spacing:.3px">Scale</div>
<div class="t" style="left:1105px;top:158px;color:#780000">X</div><div class="fld" style="left:1116px;top:157px;width:49px">0</div>
<div class="t" style="left:1170px;top:158px;color:#780000">Y</div><div class="fld" style="left:1180px;top:157px;width:51px">0</div>
<div class="t" style="left:1236px;top:158px;color:#780000">Z</div><div class="fld" style="left:1246px;top:157px;width:49px">0</div>
<div class="t" style="left:1105px;top:176px;color:#780000">X</div><div class="fld" style="left:1116px;top:175px;width:49px">0</div>
<div class="t" style="left:1170px;top:176px;color:#780000">Y</div><div class="fld" style="left:1180px;top:175px;width:51px">0</div>
<div class="t" style="left:1236px;top:176px;color:#780000">Z</div><div class="fld" style="left:1246px;top:175px;width:49px">0</div>
<div class="t" style="left:1105px;top:193.500px;color:#780000">X</div><div class="fld" style="left:1116px;top:193px;width:49px">1</div>
<div class="t" style="left:1170px;top:193.500px;color:#780000">Y</div><div class="fld" style="left:1180px;top:193px;width:51px">1</div>
<div class="t" style="left:1236px;top:193.500px;color:#780000">Z</div><div class="fld" style="left:1246px;top:193px;width:49px">1</div>

<div class="a" style="left:1012px;top:212px;width:288px;height:1px;background:#980000"></div>
<svg class="a" style="left:1016px;top:219px" width="9" height="8" viewBox="0 0 9 8"><path d="M0 0h9L4.500 8z" fill="#900000"/></svg>
<div class="a" style="left:1030px;top:217px;width:10px;height:13px;background:#e00000"></div>
<div class="a" style="left:1046px;top:217px;width:12px;height:12px;background:#b00000;border:1px solid #500000;border-radius:2px"></div>
<svg class="a" style="left:1047px;top:216px" width="12" height="12" viewBox="0 0 12 12"><path d="M2 6l3 4 5-9" fill="none" stroke="#200000" stroke-width="2"/></svg>
<div class="t b" style="left:1061px;top:217px;font-size:11px;letter-spacing:.2px;color:#280000">Field (Script)</div>
<svg class="a" style="left:1248px;top:216px" width="50" height="14" viewBox="0 0 50 14"><rect x="1" y="1" width="11" height="12" rx="1" fill="#a00000" stroke="#300000" stroke-width="1.200"/><path d="M20 4h9M20 9h9M26 1v5M23 7v5" stroke="#300000" stroke-width="1.600"/><circle cx="40" cy="6" r="3" fill="none" stroke="#200000" stroke-width="2"/><path d="M40 1v1.500M40 9.500V11M35 6h1.500M43.500 6H45M47 9v2" stroke="#200000" stroke-width="1.400"/></svg>

<div class="t d" style="left:1027px;top:232.500px;letter-spacing:.3px">Script</div>
<div class="fld d" style="left:1145px;top:232px;width:133px;padding-left:15px;border-color:#ac0000">Field</div>
<div class="tg" style="top:235px;opacity:.5"></div>
<div class="t" style="left:1027px;top:250.500px;letter-spacing:.3px">Block</div>
<div class="fld" style="left:1145px;top:250px;width:133px;padding-left:15px">Block</div>
<svg class="a" style="left:1148px;top:252px" width="11" height="11" viewBox="0 0 14 14"><path d="M7 .5 13.500 3v8L7 13.500.5 11V3z" fill="#600000"/></svg>
<div class="tg" style="top:253px"></div>
<div class="t" style="left:1027px;top:268.500px">Red_sprite</div><div class="fld" style="left:1145px;top:268px;width:133px;padding-left:15px">block1</div><div class="ic" style="top:270px"></div><div class="tg" style="top:271px"></div>
<div class="t" style="left:1027px;top:286.500px">Orange_sprite</div><div class="fld" style="left:1145px;top:286px;width:133px;padding-left:15px">block2</div><div class="ic" style="top:288px"></div><div class="tg" style="top:289px"></div>
<div class="t" style="left:1027px;top:304.500px">Yellow_sprite</div><div class="fld" style="left:1145px;top:304px;width:133px;padding-left:15px">block3</div><div class="ic" style="top:306px"></div><div class="tg" style="top:307px"></div>
<div class="t" style="left:1027px;top:322.500px">Green_sprite</div><div class="fld" style="left:1145px;top:322px;width:133px;padding-left:15px">block4</div><div class="ic" style="top:324px"></div><div class="tg" style="top:325px"></div>
<div class="t" style="left:1027px;top:340.500px">Blue_sprite</div><div class="fld" style="left:1145px;top:340px;width:133px;padding-left:15px">block5</div><div class="ic" style="top:342px"></div><div class="tg" style="top:343px"></div>
<div class="t" style="left:1027px;top:358.500px">Indigo_sprite</div><div class="fld" style="left:1145px;top:358px;width:133px;padding-left:15px">block6</div><div class="ic" style="top:360px"></div><div class="tg" style="top:361px"></div>
<div class="t" style="left:1027px;top:376.500px">Violet_sprite</div><div class="fld" style="left:1145px;top:376px;width:133px;padding-left:15px">block7</div><div class="ic" style="top:378px"></div><div class="tg" style="top:379px"></div>
<div class="a" style="left:1012px;top:396px;width:288px;height:1px;background:#a00000"></div>
<div class="btn" style="left:1039px;top:404px;width:229px;height:23px;background:linear-gradient(#ff0000,#e80000);text-align:center;line-height:20px;font-size:12px;letter-spacing:.4px;color:#600000;border-radius:4px">Add Component</div>

<!-- status -->
<svg class="a" style="left:4px;top:750px" width="13" height="12" viewBox="0 0 13 12"><circle cx="6.500" cy="6" r="5.500" fill="#e00000"/></svg>
<div class="t" style="left:20px;top:750px;font-size:11px;letter-spacing:0;color:#400000">create block</div>
</body></html>
